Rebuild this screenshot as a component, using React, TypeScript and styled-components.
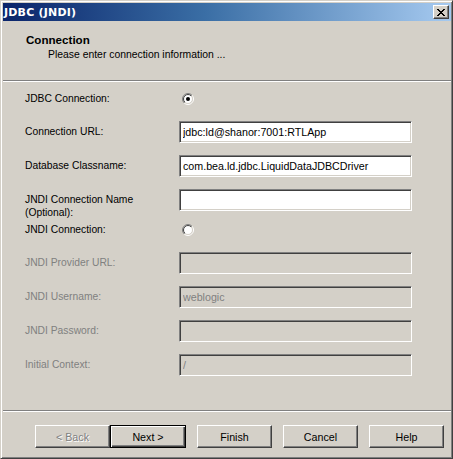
import React from 'react';
import styled, { createGlobalStyle } from 'styled-components';

const GlobalStyle = createGlobalStyle`
  html, body {
    margin: 0;
    padding: 0;
    background: #d4d0c8;
  }
  * {
    box-sizing: border-box;
  }
`;

const Window = styled.div`
  width: 453px;
  height: 459px;
  display: flex;
  flex-direction: column;
  padding: 2px 1px 2px 2px;
  background: #d4d0c8;
  border: 1px solid;
  border-color: #d4d0c8 #404040 #404040 #d4d0c8;
  box-shadow: inset 1px 1px #ffffff, inset -1px -1px #808080;
  font-family: "Liberation Sans", Arial, sans-serif;
  font-size: 10.5px;
  color: #000;
`;

const TitleBar = styled.div`
  height: 18px;
  flex: none;
  display: flex;
  align-items: center;
  justify-content: space-between;
  padding: 0 2px 0 1px;
  background: linear-gradient(to right, #0a246a 0%, #3a6ea5 45%, #a6caf0 100%);
`;

const TitleText = styled.span`
  font-family: "DejaVu Sans", Verdana, sans-serif;
  font-weight: bold;
  font-size: 11px;
  color: #fff;
  letter-spacing: 0.2px;
`;

const CloseButton = styled.div`
  width: 16px;
  height: 14px;
  display: flex;
  align-items: center;
  justify-content: center;
  background: #d4d0c8;
  border: 1px solid;
  border-color: #ffffff #404040 #404040 #ffffff;
  box-shadow: inset -1px -1px #808080;
`;

const Header = styled.div`
  height: 59px;
  flex: none;
  padding: 12px 0 0 23px;
`;

const HeaderTitle = styled.div`
  font-weight: bold;
  font-size: 11.6px;
  line-height: 14px;
`;

const HeaderSubtitle = styled.div`
  font-size: 10.4px;
  line-height: 14px;
  padding-left: 22px;
  margin-top: 1px;
`;

const Divider = styled.div`
  height: 2px;
  flex: none;
  border-top: 1px solid #808080;
  border-bottom: 1px solid #ffffff;
`;

const Form = styled.div`
  flex: 1;
  display: flex;
  flex-direction: column;
  padding: 6px 0 0 22px;
`;

const Row = styled.div<{ $space: number }>`
  display: grid;
  grid-template-columns: 154px 233px;
  align-items: start;
  min-height: 22px;
  margin-top: ${(p) => p.$space}px;
`;

const Label = styled.div<{ $disabled?: boolean }>`
  padding-top: 4px;
  line-height: 13px;
  font-size: 10.3px;
  color: ${(p) => (p.$disabled ? '#808080' : '#000')};
`;

const Field = styled.input<{ $disabled?: boolean }>`
  width: 233px;
  height: 22px;
  margin: 0;
  padding: 0 0 0 3px;
  font-family: "Liberation Sans", Arial, sans-serif;
  font-size: 10.7px;
  outline: none;
  border: 1px solid;
  border-color: #808080 #ffffff #ffffff #808080;
  box-shadow: inset 1px 1px #404040, inset -1px -1px #d4d0c8;
  background: ${(p) => (p.$disabled ? '#d4d0c8' : '#ffffff')};
  color: ${(p) => (p.$disabled ? '#808080' : '#000')};
  -webkit-text-fill-color: ${(p) => (p.$disabled ? '#808080' : '#000')};
`;

const RadioWrap = styled.div`
  height: 22px;
  display: flex;
  align-items: center;
  padding-left: 3px;
`;

const ButtonBar = styled.div`
  flex: none;
  display: flex;
  justify-content: flex-end;
  gap: 11px;
  padding: 13px 7px 8px 0;
`;

const ButtonPair = styled.div`
  display: flex;
`;

const Button = styled.div<{ $default?: boolean; $disabled?: boolean }>`
  width: ${(p) => (p.$default ? 76 : 75)}px;
  height: 23px;
  display: flex;
  align-items: center;
  justify-content: center;
  background: #d4d0c8;
  border: 1px solid;
  border-color: ${(p) =>
    p.$default ? '#000' : '#ffffff #404040 #404040 #ffffff'};
  box-shadow: ${(p) =>
    p.$default
      ? 'inset 1px 1px #ffffff, inset -1px -1px #404040, inset -2px -2px #808080'
      : 'inset -1px -1px #808080'};
  color: ${(p) => (p.$disabled ? '#808080' : '#000')};
  text-shadow: ${(p) => (p.$disabled ? '1px 1px 0 #ffffff' : 'none')};
  font-size: 10.7px;
`;

const Radio: React.FC<{ checked?: boolean }> = ({ checked }) => (
  <svg width="12" height="12" viewBox="0 0 12 12">
    <defs>
      <linearGradient id="rOuter" x1="0" y1="0" x2="1" y2="1">
        <stop offset="0.5" stopColor="#808080" />
        <stop offset="0.5" stopColor="#ffffff" />
      </linearGradient>
      <linearGradient id="rInner" x1="0" y1="0" x2="1" y2="1">
        <stop offset="0.5" stopColor="#404040" />
        <stop offset="0.5" stopColor="#d4d0c8" />
      </linearGradient>
    </defs>
    <circle cx="6" cy="6" r="5.5" fill="none" stroke="url(#rOuter)" />
    <circle cx="6" cy="6" r="4.5" fill="#ffffff" stroke="url(#rInner)" />
    {checked && <circle cx="6" cy="6" r="2" fill="#000" />}
  </svg>
);

type FieldDef = {
  label: React.ReactNode;
  value?: string;
  radio?: boolean;
  checked?: boolean;
  disabled?: boolean;
  space: number;
};

const rows: FieldDef[] = [
  { label: 'JDBC Connection:', radio: true, checked: true, space: 0 },
  { label: 'Connection URL:', value: 'jdbc:ld@shanor:7001:RTLApp', space: 11 },
  { label: 'Database Classname:', value: 'com.bea.ld.jdbc.LiquidDataJDBCDriver', space: 12 },
  {
    label: (
      <>
        JNDI Connection Name
        <br />
        (Optional):
      </>
    ),
    value: '',
    space: 12,
  },
  { label: 'JNDI Connection:', radio: true, space: 0 },
  { label: 'JNDI Provider URL:', value: '', disabled: true, space: 11 },
  { label: 'JNDI Username:', value: 'weblogic', disabled: true, space: 12 },
  { label: 'JNDI Password:', value: '', disabled: true, space: 12 },
  { label: 'Initial Context:', value: '/', disabled: true, space: 12 },
];

export default function App() {
  return (
    <>
      <GlobalStyle />
      <Window>
        <TitleBar>
          <TitleText>JDBC (JNDI)</TitleText>
          <CloseButton>
            <svg width="8" height="7" viewBox="0 0 8 7">
              <path
                d="M0 0h2v1h1v1h2V1h1V0h2v1H7v1H6v1H5v1h1v1h1v1h1v1H6V6H5V5H3v1H2v1H0V6h1V5h1V4h1V3H2V2H1V1H0z"
                fill="#000"
              />
            </svg>
          </CloseButton>
        </TitleBar>
        <Header>
          <HeaderTitle>Connection</HeaderTitle>
          <HeaderSubtitle>Please enter connection information ...</HeaderSubtitle>
        </Header>
        <Divider />
        <Form>
          {rows.map((r, i) => (
            <Row key={i} $space={r.space}>
              <Label $disabled={r.disabled}>{r.label}</Label>
              {r.radio ? (
                <RadioWrap>
                  <Radio checked={r.checked} />
                </RadioWrap>
              ) : (
                <Field
                  readOnly
                  defaultValue={r.value}
                  $disabled={r.disabled}
                  disabled={r.disabled}
                />
              )}
            </Row>
          ))}
        </Form>
        <Divider />
        <ButtonBar>
          <ButtonPair>
            <Button $disabled>&lt; Back</Button>
            <Button $default>Next &gt;</Button>
          </ButtonPair>
          <Button>Finish</Button>
          <Button>Cancel</Button>
          <Button>Help</Button>
        </ButtonBar>
      </Window>
    </>
  );
}
